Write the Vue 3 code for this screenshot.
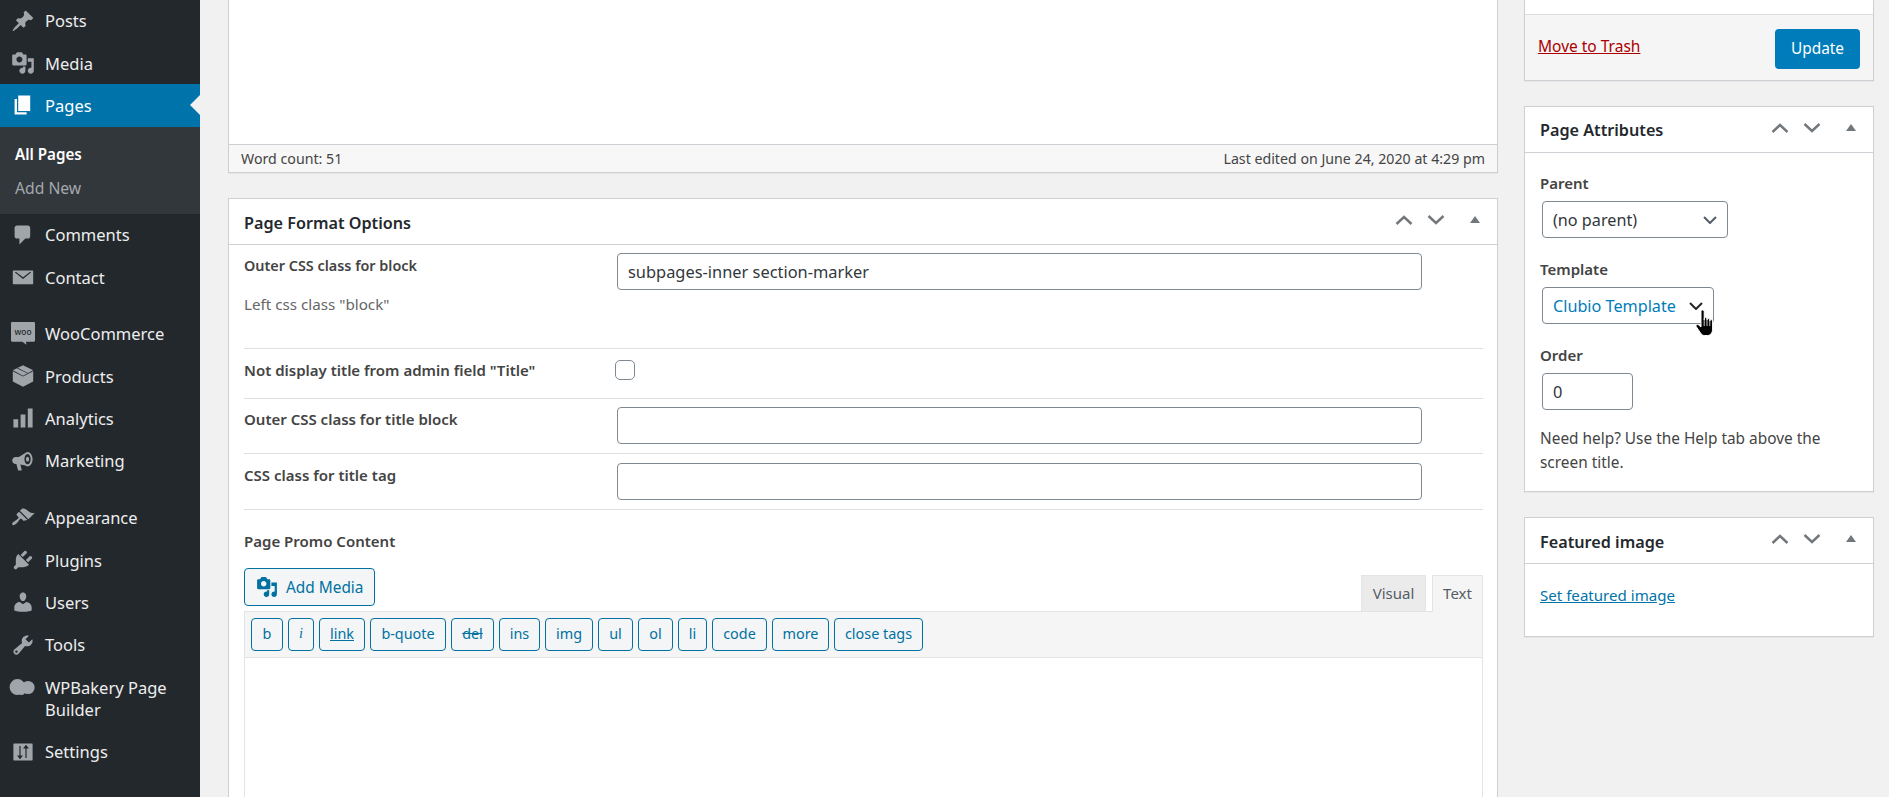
<script setup>
const nav1 = [
  { label: 'Posts', d: 'M10.44 3.02l1.82-1.82 6.36 6.35-1.83 1.82c-1.05-.68-2.48-.57-3.41.36l-.75.75c-.92.93-1.04 2.35-.35 3.41l-1.83 1.82-2.41-2.41-2.8 2.79c-.42.42-3.38 2.71-3.8 2.29s1.86-3.39 2.28-3.81l2.79-2.79L4.1 9.36l1.83-1.82c1.05.69 2.48.57 3.4-.36l.75-.75c.93-.92 1.05-2.35.36-3.41z' },
  { label: 'Media', d: 'M13 11V4c0-.55-.45-1-1-1h-1.67L9 1H5L3.67 3H2c-.55 0-1 .45-1 1v7c0 .55.45 1 1 1h10c.55 0 1-.45 1-1zM7 4.5c1.38 0 2.5 1.12 2.5 2.5S8.38 9.5 7 9.5 4.5 8.38 4.5 7 5.62 4.5 7 4.5zM14 6h5v10.5c0 1.38-1.12 2.5-2.5 2.5S14 17.88 14 16.5s1.12-2.5 2.5-2.5c.17 0 .34.02.5.05V9h-3V6zm-4 8.05V13h2v3.5c0 1.38-1.12 2.5-2.5 2.5S7 17.88 7 16.5 8.12 14 9.5 14c.17 0 .34.02.5.05z' }
]
const nav2 = [
  { label: 'Comments', d: 'M5 2h9c1.1 0 2 .9 2 2v7c0 1.1-.9 2-2 2h-2l-5 5v-5H5c-1.1 0-2-.9-2-2V4c0-1.1.9-2 2-2z' },
  { label: 'Contact', d: 'M2 4.500h16c.3 0 .5.2.5.5v10.500c0 .3-.2.5-.5.5H2c-.3 0-.5-.2-.5-.5V5c0-.3.2-.5.5-.5zm1.400 1.700L10 11.600l6.600-5.400v-.3l-.9-.1L10 10.200 4.300 5.800l-.9.1z' }
]
const nav3 = [
  { label: 'Products', d: 'M10 1l8.500 4.300v9.200L10 19l-8.500-4.500V5.300L10 1zM1.500 5.300L10 9.700l8.500-4.400v.7L10 10.400 1.500 6v-.7zM5.500 3.200l8.500 4.300-.6.3L4.900 3.500l.6-.3z' },
  { label: 'Analytics', d: 'M2 11h4v7H2zM8 7h4v11H8zM14 2h4v16h-4z' },
  { label: 'Marketing', d: 'M18 8.500c0 3.200-1.900 6-4.200 6-.7 0-1.400-.3-1.900-.7L7.800 13l1.100 4.200c.1.500-.2.800-.6.800H6.500c-.3 0-.6-.2-.7-.5L4.500 12.600H4c-1.700 0-3-1.300-3-3s1.300-3 3-3h2.500l5.400-3.300c.6-.5 1.200-.8 1.900-.8 2.300 0 4.200 2.800 4.200 6zm-4.200 4.300c1.500 0 2.600-2 2.600-4.300s-1.100-4.300-2.600-4.300-2.600 2-2.600 4.300 1.100 4.300 2.600 4.300zm0-6.300c.8 0 1.300.9 1.300 2s-.5 2-1.300 2-1.300-.9-1.300-2 .5-2 1.300-2z' }
]
const nav4 = [
  { label: 'Appearance', d: 'M14.480 11.060L7.410 3.990l1.500-1.500c.5-.56 2.300-.47 3.510.32 1.210.8 1.430 1.280 2.910 2.100 1.180.64 2.450 1.260 4.450.85zm-.71.71L6.700 4.700 4.930 6.470c-.39.39-.39 1.020 0 1.410l1.060 1.060c.39.39.39 1.030 0 1.420-.6.6-1.430 1.110-2.210 1.690-.35.26-.7.53-1.010.84C1.430 13.230.4 14.910 1.200 15.710c.8.8 2.480-.23 3.820-1.570.31-.31.58-.66.85-1.010.58-.78 1.080-1.600 1.680-2.210.39-.39 1.030-.39 1.420 0l1.060 1.060c.39.39 1.020.39 1.410 0z' },
  { label: 'Plugins', d: 'M13.110 4.360L9.870 7.600 8 5.730l3.240-3.240c.35-.34 1.050-.2 1.560.32.52.51.66 1.210.31 1.550zm-8 1.770l.91-1.120 9.010 9.010-1.190.84c-.71.71-2.630 1.160-3.820 1.160H6.140L4.900 17.260c-.59.59-1.540.59-2.120 0-.59-.58-.59-1.530 0-2.120l1.240-1.240v-3.880c0-1.130.4-3.190 1.090-3.890zm7.260 3.970l3.240-3.240c.34-.35 1.040-.21 1.550.31.52.51.66 1.210.31 1.550l-3.240 3.250z' },
  { label: 'Users', d: 'M10 9.250c-2.270 0-2.730-3.440-2.730-3.440C7 4.020 7.820 2 9.970 2c2.160 0 2.980 2.020 2.710 3.810 0 0-.41 3.440-2.68 3.440zm0 2.570L12.720 10c2.390 0 4.520 2.330 4.520 4.530v2.490s-3.650 1.130-7.240 1.130c-3.650 0-7.240-1.130-7.240-1.130v-2.490c0-2.250 1.940-4.480 4.470-4.480z' },
  { label: 'Tools', d: 'M16.680 9.770c-1.340 1.340-3.300 1.670-4.950.99l-5.410 6.520c-.99.99-2.590.99-3.580 0s-.99-2.590 0-3.570l6.520-5.420c-.68-1.650-.35-3.610.99-4.950 1.280-1.280 3.120-1.620 4.720-1.060l-2.890 2.890 2.820 2.820 2.860-2.870c.53 1.580.18 3.390-1.080 4.650zM3.810 16.210c.4.39 1.040.39 1.430 0 .4-.4.4-1.040 0-1.430-.39-.4-1.030-.4-1.430 0-.39.39-.39 1.030 0 1.430z' },
  { label: 'WPBakery Page Builder', two: true, d: 'M-1.200 9.200a6.600 6.600 0 1 0 13.200 0a6.600 6.600 0 1 0-13.200 0zM8.700 9.600a5.500 5.500 0 1 0 11 0a5.500 5.500 0 1 0-11 0zM6 13a2.800 2.800 0 1 0 5.600 0a2.800 2.800 0 1 0-5.600 0z' },
  { label: 'Settings', d: 'M2.500 3h15c.3 0 .5.2.5.5v13c0 .3-.2.5-.5.5h-15c-.3 0-.5-.2-.5-.5v-13c0-.3.2-.5.500-.5zM7 5v8H5l2.500 3L10 13H8V5H7zm6 10V7h2l-2.500-3L10 7h2v8h1z' }
]
const media = nav1[1].d
const tags = [
  { t: 'b', w: 32 }, { t: 'i', w: 26, c: 'it' }, { t: 'link', w: 46, c: 'ul' }, { t: 'b-quote', w: 76 },
  { t: 'del', w: 43, c: 'st' }, { t: 'ins', w: 41 }, { t: 'img', w: 48 }, { t: 'ul', w: 35 },
  { t: 'ol', w: 35 }, { t: 'li', w: 29 }, { t: 'code', w: 55 }, { t: 'more', w: 57 }, { t: 'close tags', w: 89 }
]
</script>

<template>
  <div class="page">
    <aside class="side">
      <a v-for="n in nav1" :key="n.label" class="item">
        <svg class="ic" viewBox="0 0 20 20"><path :d="n.d" /></svg><span>{{ n.label }}</span>
      </a>
      <a class="item cur">
        <svg class="ic" viewBox="0 0 20 20"><path d="M6 15V2h10v13H6zm-1 1h8v2H3V5h2v11z" /></svg><span>Pages</span>
      </a>
      <div class="sub">
        <a class="subcur">All Pages</a>
        <a>Add New</a>
      </div>
      <a v-for="n in nav2" :key="n.label" class="item">
        <svg class="ic" viewBox="0 0 20 20"><path :d="n.d" fill-rule="evenodd" /></svg><span>{{ n.label }}</span>
      </a>
      <div class="sep"></div>
      <a class="item">
        <svg class="ic" viewBox="0 0 20 20">
          <path d="M1 0h18c.6 0 1 .4 1 1v14.500c0 .6-.4 1-1 1h-6.500l.3 2.500-3.300-2.500H1c-.6 0-1-.4-1-1V1c0-.6.4-1 1-1z" />
          <text x="10" y="10.500" text-anchor="middle" class="woo">woo</text>
        </svg><span>WooCommerce</span>
      </a>
      <a v-for="n in nav3" :key="n.label" class="item">
        <svg class="ic" viewBox="0 0 20 20"><path :d="n.d" fill-rule="evenodd" /></svg><span>{{ n.label }}</span>
      </a>
      <div class="sep sep2"></div>
      <a v-for="n in nav4" :key="n.label" class="item" :class="{ two: n.two }">
        <svg class="ic" viewBox="0 0 20 20"><path :d="n.d" :fill-rule="n.two ? 'nonzero' : 'evenodd'" /></svg><span>{{ n.label }}</span>
      </a>
    </aside>

    <main class="left">
      <section class="editor">
        <div class="blank"></div>
        <div class="status"><span>Word count: 51</span><span>Last edited on June 24, 2020 at 4:29 pm</span></div>
      </section>

      <section class="box format">
        <header class="head">
          <h2>Page Format Options</h2>
          <div class="ctl">
            <svg viewBox="0 0 18 10"><path d="M1.500 9L9 2l7.500 7" /></svg>
            <svg viewBox="0 0 18 10"><path d="M1.500 1L9 8l7.500-7" /></svg>
            <i class="tri"></i>
          </div>
        </header>
        <div class="rows">
          <div class="row r1">
            <div>
              <label>Outer CSS class for block</label>
              <p class="hint">Left css class "block"</p>
            </div>
            <div class="inp">subpages-inner section-marker</div>
          </div>
          <div class="row r2">
            <label>Not display title from admin field "Title"</label>
            <div class="check"></div>
          </div>
          <div class="row r3">
            <label>Outer CSS class for title block</label>
            <div class="inp"></div>
          </div>
          <div class="row r4">
            <label>CSS class for title tag</label>
            <div class="inp"></div>
          </div>
          <div class="promo">
            <label>Page Promo Content</label>
            <div class="mediabar">
              <button class="addmedia">
                <svg viewBox="0 0 20 20"><path :d="media" fill-rule="evenodd" /></svg>Add Media
              </button>
              <div class="tabs">
                <span class="tab">Visual</span>
                <span class="tab on">Text</span>
              </div>
            </div>
            <div class="toolbar">
              <button v-for="b in tags" :key="b.t" :class="b.c" :style="{ width: b.w + 'px' }">{{ b.t }}</button>
            </div>
            <div class="area"></div>
          </div>
        </div>
      </section>
    </main>

    <aside class="right">
      <section class="publish">
        <div class="pubtop"></div>
        <div class="pubbar">
          <a class="trash">Move to Trash</a>
          <button class="update">Update</button>
        </div>
      </section>

      <section class="box attrs">
        <header class="head">
          <h2>Page Attributes</h2>
          <div class="ctl">
            <svg viewBox="0 0 18 10"><path d="M1.500 9L9 2l7.500 7" /></svg>
            <svg viewBox="0 0 18 10"><path d="M1.500 1L9 8l7.500-7" /></svg>
            <i class="tri"></i>
          </div>
        </header>
        <div class="attrbody">
          <label>Parent</label>
          <div class="sel w1"><span>(no parent)</span><svg viewBox="0 0 14 8"><path d="M1 1l6 6 6-6" /></svg></div>
          <label>Template</label>
          <div class="sel w2 hov">
            <span>Clubio Template</span><svg viewBox="0 0 14 8"><path d="M1 1l6 6 6-6" /></svg>
            <svg class="hand" viewBox="0 0 20 28">
              <path d="M6 2.500a1.600 1.600 0 0 1 3.200 0V11v-1a1.400 1.400 0 0 1 2.800 0v1a1.400 1.400 0 0 1 2.800 0v1a1.400 1.400 0 0 1 2.800 0V20c0 3.500-2 6.500-5 6.500H9.500c-2 0-3-1-4-2.500L1.200 17.500c-.8-1.200.9-2.800 2.200-1.700L6 18z" />
              <path class="hl" d="M9.200 11v6M12 11v6M14.800 12v5" />
            </svg>
          </div>
          <label>Order</label>
          <div class="ord">0</div>
          <p class="help">Need help? Use the Help tab above the screen title.</p>
        </div>
      </section>

      <section class="box feat">
        <header class="head">
          <h2>Featured image</h2>
          <div class="ctl">
            <svg viewBox="0 0 18 10"><path d="M1.500 9L9 2l7.500 7" /></svg>
            <svg viewBox="0 0 18 10"><path d="M1.500 1L9 8l7.500-7" /></svg>
            <i class="tri"></i>
          </div>
        </header>
        <div class="featbody"><a>Set featured image</a></div>
      </section>
    </aside>
  </div>
</template>

<style>
html, body { margin: 0; background: #f1f1f1; overflow: hidden; }
</style>

<style scoped>
* { box-sizing: border-box; }
.page {
  display: flex;
  height: 797px;
  overflow: hidden;
  background: #f1f1f1;
  font-family: "Noto Sans", "Open Sans", sans-serif;
  font-size: 15px;
  color: #444;
}
.side {
  flex: 0 0 200px;
  background: #23282d;
  color: #eee;
  margin-top: -0.5px;
}
.item {
  display: flex;
  align-items: center;
  height: 42.4px;
  padding-left: 11px;
  font-size: 16.5px;
  position: relative;
}
.item.two {
  height: 64.5px;
  align-items: flex-start;
}
.item.two span { line-height: 22px; width: 150px; padding-top: 11px; }
.item.two .ic { margin-top: 10px; overflow: visible; }
.ic { width: 24px; height: 24px; margin-right: 10px; fill: #a0a5aa; flex: none; }
.woo { font: 500 7px "Noto Sans", sans-serif; fill: #23282d; }
.cur { background: #0073aa; color: #fff; }
.cur .ic { fill: #fff; }
.cur::after {
  content: "";
  position: absolute;
  right: 0;
  top: 11px;
  border: 10px solid transparent;
  border-left: 0;
  border-right-color: #f1f1f1;
}
.sub {
  background: #32373c;
  padding: 10px 0 9px 15px;
  font-size: 15.700px;
  color: #a4a8ac;
  height: 87px;
}
.sub a { display: block; line-height: 34px; }
.subcur { color: #fff; font-weight: 600; font-size: 15.200px; }
.sep { height: 14px; }
.sep2 { height: 14.500px; }

.left {
  flex: 0 0 1270px;
  margin-left: 28px;
  display: flex;
  flex-direction: column;
  gap: 25px;
}
.editor {
  border: 1px solid #ccd0d4;
  border-top: 0;
  background: #fff;
  box-shadow: 0 1px 1px rgba(0, 0, 0, .04);
}
.blank { height: 144px; }
.status {
  display: flex;
  justify-content: space-between;
  align-items: center;
  height: 28px;
  padding: 0 12px;
  background: #f7f7f7;
  border-top: 1px solid #ccd0d4;
  font-size: 14.200px;
  color: #444;
}
.box {
  background: #fff;
  border: 1px solid #ccd0d4;
  box-shadow: 0 1px 1px rgba(0, 0, 0, .04);
}
.head {
  display: flex;
  justify-content: space-between;
  align-items: center;
  height: 46px;
  padding: 0 15px;
  border-bottom: 1px solid #ccd0d4;
}
.head h2 {
  margin: 0;
  font-size: 16.200px;
  font-weight: 600;
  color: #23282d;
}
.format .head h2 { margin-top: 2px; }
.feat .head h2 { margin-top: 3px; }
.ctl {
  display: flex;
  align-items: center;
  margin-top: -4px;
}
.ctl svg {
  width: 18px;
  height: 10px;
  margin-right: 14px;
  fill: none;
  stroke: #72777c;
  stroke-width: 2.400;
}
.ctl svg + svg { margin-right: 25px; }
.tri {
  width: 0;
  height: 0;
  margin-right: 2px;
  border: 5px solid transparent;
  border-top: 0;
  border-bottom: 7px solid #72777c;
}
.rows { padding: 0 14px 0 15px; }
.row {
  display: grid;
  grid-template-columns: 373px 805px;
  align-items: start;
  border-bottom: 1px solid #dfdfdf;
}
label {
  display: block;
  font-weight: 600;
  font-size: 15px;
  line-height: 24px;
  color: #444;
}
.r1 { padding: 8px 0 32px; }
.r2 { padding: 9px 0 16px; }
.r3 { padding: 8px 0 9px; }
.r4 { padding: 9px 0 9px; }
.r1 label { font-size: 14.400px; padding-top: 1px; margin-bottom: -1px; }
.hint { margin: 15px 0 0; line-height: 24px; color: #666; font-size: 15.200px; }
.inp {
  height: 37px;
  border: 1px solid #7e8993;
  border-radius: 4px;
  padding: 0 10px;
  line-height: 35px;
  font-size: 16.400px;
  background: #fff;
  color: #32373c;
}
.check {
  width: 20px;
  height: 20px;
  margin: 2px 0 0 -2px;
  border: 1px solid #7e8993;
  border-radius: 5px;
}
.promo { padding-top: 19px; }
.mediabar {
  display: flex;
  justify-content: space-between;
  align-items: flex-end;
  margin-top: 15px;
  height: 43px;
}
.addmedia {
  display: flex;
  align-items: center;
  width: 131px;
  height: 38px;
  margin-bottom: 5px;
  padding: 0 11px;
  border: 1px solid #0071a1;
  border-radius: 4px;
  background: #f3f5f6;
  color: #0071a1;
  font: inherit;
  font-size: 15.400px;
  white-space: nowrap;
}
.addmedia svg { width: 22px; height: 22px; margin-right: 8px; fill: #0071a1; flex: none; }
.tabs { display: flex; gap: 6px; }
.tab {
  display: block;
  height: 36px;
  padding: 0 10px;
  line-height: 34px;
  background: #ebebeb;
  border: 1px solid #e2e4e7;
  border-bottom: 0;
  color: #555d66;
  font-size: 15px;
  width: 65px;
  text-align: center;
}
.tab.on {
  width: 51px;
  padding: 0;
  background: #f5f5f5;
  position: relative;
  margin-bottom: -1px;
  height: 37px;
}
.toolbar {
  display: flex;
  gap: 5px;
  height: 47px;
  padding: 6px 0 0 6px;
  background: #f5f5f5;
  border: 1px solid #e2e4e7;
}
.toolbar button {
  height: 33px;
  padding: 0 0 2px;
  border: 1px solid #0071a1;
  border-radius: 4px;
  background: #f3f5f6;
  color: #0071a1;
  font: inherit;
  font-size: 14.400px;
}
.toolbar .it { font-family: "Liberation Serif", serif; font-style: italic; }
.ul { text-decoration: underline; }
.st { text-decoration: line-through; }
.area {
  height: 200px;
  background: #fff;
  border: 1px solid #e2e4e7;
  border-top: 0;
}

.right {
  flex: 0 0 350px;
  margin-left: 26px;
  display: flex;
  flex-direction: column;
  gap: 25px;
}
.publish {
  border: 1px solid #ccd0d4;
  border-top: 0;
  box-shadow: 0 1px 1px rgba(0, 0, 0, .04);
}
.pubtop { height: 14px; background: #fff; }
.pubbar {
  display: flex;
  justify-content: space-between;
  align-items: center;
  height: 66px;
  padding: 0 13px;
  background: #f5f5f5;
  border-top: 1px solid #ddd;
}
.trash { color: #a00; text-decoration: underline; font-size: 15.500px; margin-top: -4px; }
.update {
  width: 85px;
  height: 40px;
  margin-top: 2px;
  border: 0;
  border-radius: 4px;
  background: #007cba;
  color: #fff;
  font: inherit;
  font-size: 15.400px;
}
.attrbody { padding: 18px 15px 0; height: 338px; }
.attrbody label { line-height: 24px; margin-top: 19px; }
.attrbody label:first-child { margin-top: 0; }
.sel, .ord {
  position: relative;
  height: 37px;
  margin: 6px 0 0 2px;
  border: 1px solid #7e8993;
  border-radius: 4px;
  line-height: 34px;
  padding-left: 10px;
  font-size: 16.200px;
  color: #32373c;
  display: flex;
  align-items: center;
  justify-content: space-between;
}
.w1 { width: 186px; }
.w2 { width: 172px; }
.sel > svg:not(.hand) {
  width: 14px;
  height: 8px;
  margin-right: 10px;
  fill: none;
  stroke: #555d66;
  stroke-width: 2;
}
.hov span { color: #007cba; }
.hov > svg:not(.hand) { stroke: #23282d; }
.hand {
  position: absolute;
  left: 152px;
  top: 21px;
  width: 20px;
  height: 28px;
  fill: #000;
  stroke: #fff;
  stroke-width: 1;
}
.hand .hl { fill: none; stroke: #fff; stroke-width: .8; }
.ord { width: 91px; font-size: 16.400px; }
.help { margin: 17px 0 0; line-height: 24px; font-size: 15.400px; color: #444; }
.featbody { padding: 21px 15px 0; height: 72px; font-size: 15.100px; }
.featbody a { color: #0073aa; text-decoration: underline; }
</style>
